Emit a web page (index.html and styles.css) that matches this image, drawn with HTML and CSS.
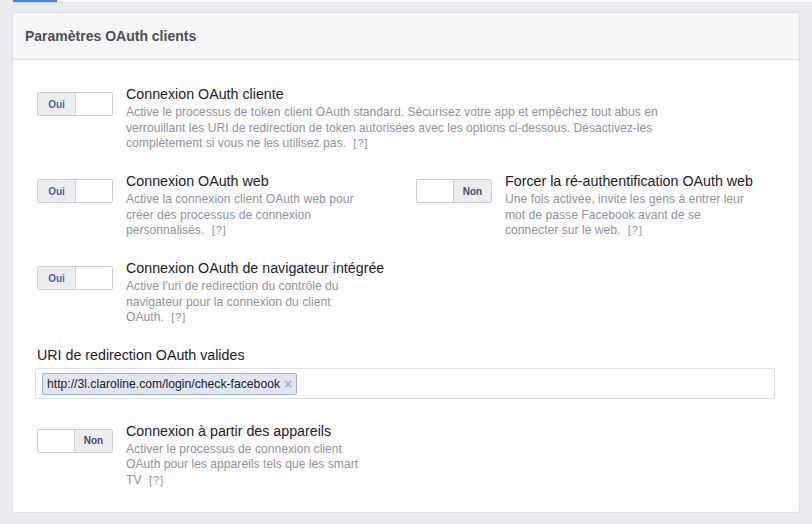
FILE: index.html
```html
<!DOCTYPE html>
<html lang="fr">
<head>
<meta charset="utf-8">
<title>Paramètres OAuth clients</title>
<link rel="stylesheet" href="styles.css">
</head>
<body>
<div class="topstrip"><span class="topstrip-active"></span></div>
<section class="card">
  <header class="card-header">
    <h2 class="card-title">Paramètres OAuth clients</h2>
  </header>
  <div class="card-body">
    <div class="setting setting-wide">
      <div class="toggle toggle-on"><span class="toggle-label">Oui</span><span class="toggle-blank"></span></div>
      <div class="setting-text">
        <div class="setting-title">Connexion OAuth cliente</div>
        <div class="setting-desc">Active le processus de token client OAuth standard. Sécurisez votre app et empêchez tout abus en verrouillant les URI de redirection de token autorisées avec les options ci-dessous. Désactivez-les complètement si vous ne les utilisez pas. <span class="help">[?]</span></div>
      </div>
    </div>

    <div class="setting-pair">
      <div class="setting">
        <div class="toggle toggle-on"><span class="toggle-label">Oui</span><span class="toggle-blank"></span></div>
        <div class="setting-text">
          <div class="setting-title">Connexion OAuth web</div>
          <div class="setting-desc">Active la connexion client OAuth web pour créer des processus de connexion personnalisés. <span class="help">[?]</span></div>
        </div>
      </div>
      <div class="setting">
        <div class="toggle toggle-off"><span class="toggle-blank"></span><span class="toggle-label">Non</span></div>
        <div class="setting-text">
          <div class="setting-title">Forcer la ré-authentification OAuth web</div>
          <div class="setting-desc">Une fois activée, invite les gens à entrer leur mot de passe Facebook avant de se connecter sur le web. <span class="help">[?]</span></div>
        </div>
      </div>
    </div>

    <div class="setting">
      <div class="toggle toggle-on"><span class="toggle-label">Oui</span><span class="toggle-blank"></span></div>
      <div class="setting-text">
        <div class="setting-title">Connexion OAuth de navigateur intégrée</div>
        <div class="setting-desc">Active l’uri de redirection du contrôle du navigateur pour la connexion du client OAuth. <span class="help">[?]</span></div>
      </div>
    </div>

    <div class="field">
      <label class="field-label">URI de redirection OAuth valides</label>
      <div class="token-input">
        <span class="token">http://3l.claroline.com/login/check-facebook<span class="token-x">×</span></span>
      </div>
    </div>

    <div class="setting">
      <div class="toggle toggle-off"><span class="toggle-blank"></span><span class="toggle-label">Non</span></div>
      <div class="setting-text">
        <div class="setting-title">Connexion à partir des appareils</div>
        <div class="setting-desc">Activer le processus de connexion client OAuth pour les appareils tels que les smart TV <span class="help">[?]</span></div>
      </div>
    </div>
  </div>
</section>
</body>
</html>
```
FILE: styles.css
```css
* { box-sizing: border-box; }
html, body { margin: 0; padding: 0; }
body {
  background: #e9ebee;
  font-family: "Liberation Sans", Arial, Helvetica, sans-serif;
  color: #1d2129;
  width: 812px;
  height: 524px;
  overflow: hidden;
}
.topstrip {
  margin-left: 12px;
  height: 3px;
  background: #fff;
  border-left: 1px solid #dddfe2;
  border-bottom: 1px solid #dddfe2;
  display: flex;
}
.topstrip-active {
  width: 44px;
  height: 2px;
  background: #4080ff;
}
.card {
  margin: 9px 12px 0 12px;
  background: #fff;
  border: 1px solid #dddfe2;
  border-radius: 3px;
  height: 501px;
}
.card-header {
  height: 47px;
  background: #f6f7f9;
  border-bottom: 1px solid #dddfe2;
  border-radius: 3px 3px 0 0;
  padding: 0 12px;
  display: flex;
  align-items: center;
}
.card-title {
  margin: 0;
  font-size: 14px;
  line-height: 18px;
  font-weight: bold;
  color: #4b4f56;
}
.card-body {
  padding: 25px 24px 0 24px;
  display: flex;
  flex-direction: column;
  gap: 20.5px;
}
.setting {
  display: flex;
  align-items: flex-start;
  gap: 13px;
}
.setting-pair {
  display: grid;
  grid-template-columns: 379px 1fr;
}
.setting-title {
  font-size: 14.25px;
  line-height: 18px;
  color: #1d2129;
  white-space: nowrap;
}
.setting-desc {
  width: 243px;
  margin-top: 2px;
  font-size: 12.15px;
  line-height: 15.5px;
  color: #90949c;
}
.setting-wide .setting-desc { width: 545px; }
.help {
  font-size: 11px;
  margin-left: 4px;
  letter-spacing: 1px;
  color: #90949c;
}
.toggle {
  flex: none;
  margin-top: 7px;
  width: 76px;
  height: 24px;
  border: 1px solid #ccd0d5;
  border-radius: 2px;
  display: flex;
  background: #fff;
  overflow: hidden;
}
.toggle-label {
  width: 38px;
  background: #ebedf0;
  display: flex;
  align-items: center;
  justify-content: center;
  font-size: 10px;
  font-weight: bold;
}
.toggle-blank { flex: 1; }
.toggle-on .toggle-label { color: #4267b2; border-right: 1px solid #ccd0d5; }
.toggle-off .toggle-label { color: #4b4f56; border-left: 1px solid #ccd0d5; }
.field {
  display: flex;
  flex-direction: column;
  gap: 4px;
  margin-bottom: 2px;
}
.field-label {
  font-size: 14.25px;
  line-height: 18px;
  color: #1d2129;
}
.token-input {
  margin-left: -2px;
  height: 31px;
  border: 1px solid #dddfe2;
  border-radius: 2px;
  padding: 3px 6px;
  display: flex;
  align-items: center;
}
.token {
  height: 22px;
  display: flex;
  align-items: center;
  padding: 0 4px;
  background: #dfe5f2;
  border: 1px solid #9cb4d8;
  border-radius: 2px;
  font-size: 12.2px;
  color: #1d2129;
}
.token-x {
  margin-left: 4px;
  color: #a8b0bd;
  font-size: 14px;
  font-weight: bold;
}
```
